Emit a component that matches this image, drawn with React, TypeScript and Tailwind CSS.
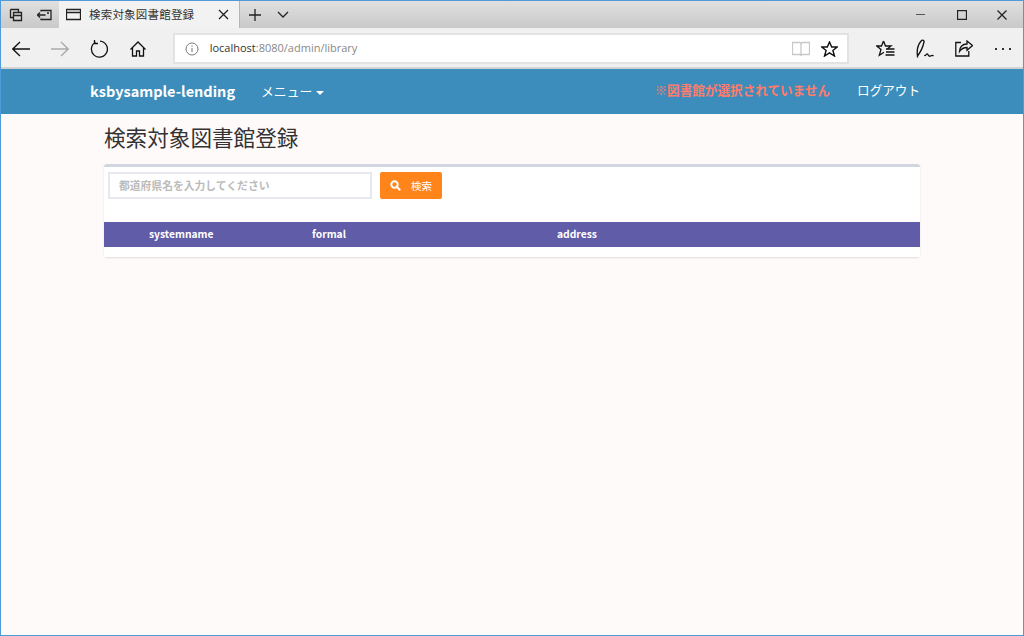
import React from "react";

const ic = { fill: "none", stroke: "currentColor", strokeWidth: 1.3 } as const;
const jp = "font-['Noto_Sans_CJK_JP','Noto_Sans',sans-serif]";
const latin = "font-['Open_Sans','Noto_Sans_CJK_JP',sans-serif]";

function Ico({ w = 20, h = 20, className = "", children }: { w?: number; h?: number; className?: string; children: React.ReactNode }) {
  return (
    <svg width={w} height={h} viewBox={`0 0 ${w} ${h}`} className={`shrink-0 ${className}`} {...ic}>
      {children}
    </svg>
  );
}

export default function App() {
  return (
    <div className={`w-[1024px] h-[636px] flex flex-col overflow-hidden border border-b-0 border-[#4f9bd9] bg-[#fffafa] ${jp}`}>
      {/* tab strip */}
      <div className="h-[27px] shrink-0 flex items-stretch bg-gradient-to-b from-[#e0e0e0] to-[#c9c9c9] text-[#222]">
        <div className="w-[29px] flex items-center justify-center">
          <Ico w={14} h={14}>
            <path d="M1.500 1.500h8v3M1.500 1.500v8h3" />
            <path d="M4.500 4.500h8v8h-8zM4.500 7.500h8" />
          </Ico>
        </div>
        <div className="w-[29px] flex items-center justify-center">
          <Ico w={15} h={12}>
            <path d="M4 2.500V1.500h10v9H4V9.500M0.500 6h8M3 3.500L0.500 6L3 8.500M10 4h2" />
          </Ico>
        </div>
        <div className="w-[181px] bg-[#f2f2f2] flex items-center border-r border-[#b5b5b5]">
          <Ico w={15} h={13} className="ml-[7px]">
            <path d="M0.500 1.500h14v10h-14zM0.500 4.500h14" />
          </Ico>
          <span className="ml-[8px] text-[11.500px] tracking-[0.2px] text-[#333] whitespace-nowrap">検索対象図書館登録</span>
          <Ico w={11} h={11} className="ml-[24px]">
            <path d="M1 1l9 9M10 1l-9 9" />
          </Ico>
        </div>
        <div className="w-[29px] flex items-center justify-center">
          <Ico w={12} h={12}>
            <path d="M6 0v12M0 6h12" />
          </Ico>
        </div>
        <div className="w-[27px] flex items-center justify-center">
          <Ico w={12} h={7}>
            <path d="M1 1l5 5l5-5" />
          </Ico>
        </div>
        <div className="flex-1" />
        <div className="w-[41px] flex items-center justify-center">
          <div className="w-[9px] h-[1.500px] bg-[#555]" />
        </div>
        <div className="w-[41px] flex items-center justify-center">
          <Ico w={10} h={10}>
            <path d="M0.500 0.500h9v9h-9z" />
          </Ico>
        </div>
        <div className="w-[41px] pr-[1px] flex items-center justify-center">
          <Ico w={10} h={10}>
            <path d="M0.500 0.500l9 9M9.500 0.500l-9 9" />
          </Ico>
        </div>
      </div>

      {/* toolbar */}
      <div className="h-[41px] shrink-0 flex items-center pt-[2px] bg-[#f0f0f0] border-b-2 border-[#d2d2d2] text-[#111]">
        <div className="w-[40px] flex justify-center">
          <Ico w={18} h={16}>
            <path d="M0.500 8H18M8 1L0.800 8L8 15" />
          </Ico>
        </div>
        <div className="w-[39px] flex justify-center text-[#aaa]">
          <Ico w={18} h={16}>
            <path d="M0 8H17.500M10 1l7.200 7l-7.200 7" />
          </Ico>
        </div>
        <div className="w-[39px] flex justify-center">
          <Ico w={18} h={18}>
            <path d="M5.500 2.200A8 8 0 1 0 10 1.200M4.500 0v3.500H8" />
          </Ico>
        </div>
        <div className="w-[39px] flex justify-center">
          <Ico w={16} h={16}>
            <path d="M0.500 8.500L8 1l7.500 7.500M2.500 7v8h4v-5h3v5h4V7" />
          </Ico>
        </div>
        <div className="ml-[15px] w-[678px] h-[31px] bg-white border-2 border-[#e3e3e3] flex items-center">
          <Ico w={14} h={14} className="ml-[10px] text-[#777]">
            <circle cx="7" cy="7" r="6" strokeWidth="1" />
            <path d="M7 6v4.200M7 3.500v1.300" strokeWidth="1" />
          </Ico>
          <span className={`ml-[11px] text-[11px] ${latin} text-[#888] whitespace-nowrap`}>
            <span className="text-[#333]">localhost</span>:8080/admin/library
          </span>
          <div className="flex-1" />
          <Ico w={18} h={15} className="text-[#c8c8c8] mr-[11px]">
            <path d="M0.500 1.500h7.500l1 1l1-1h7.500v12H10l-1 1l-1-1H0.500zM9 2.500v11" />
          </Ico>
          <Ico w={17} h={16} className="mr-[9px]">
            <path d="M8.500 1l2.200 5h5.500l-4.300 3.500l1.600 5.500l-5-3.200l-5 3.200l1.600-5.500L0.800 6h5.500z" strokeWidth="1.400" />
          </Ico>
        </div>
        <div className="ml-[16px] w-[40px] flex justify-center">
          <Ico w={19} h={17}>
            <path d="M7.500 1l2 5H15L10.500 9.500M7.500 1l-2 5H0.800l4.200 3.500l-1.700 5.800l4.700-3M10 9h8.500M10 12h8.500M9.500 15h9" />
          </Ico>
        </div>
        <div className="w-[39px] flex justify-center">
          <Ico w={18} h={19}>
            <path d="M1.500 17C0.500 11 2.500 5 5.500 1.500c1-1 3 0 2.500 1.500C7 8 4.500 13 1.500 17zM1.500 17v1.500M8.500 16c1 2 2-2 3-1s1 3 3 2s2-1 3 0" />
          </Ico>
        </div>
        <div className="w-[39px] flex justify-center">
          <Ico w={18} h={17}>
            <path d="M6 2.500H0.800V16h13v-5M17.500 5.500L12 1V4C7 4 4.500 7.500 4.500 11.500C6.500 8.500 9 7.500 12 7.500v2.800z" />
          </Ico>
        </div>
        <div className="w-[40px] flex justify-center gap-[5px]">
          <div className="w-[2px] h-[2px] bg-[#333]" />
          <div className="w-[2px] h-[2px] bg-[#333]" />
          <div className="w-[2px] h-[2px] bg-[#333]" />
        </div>
      </div>

      {/* navbar */}
      <div className="h-[45px] shrink-0 bg-[#3c8dbc] flex items-center pl-[89px] pr-[103px] text-white">
        <span className="mt-[-2px] text-[14.500px] font-bold whitespace-nowrap">ksbysample-lending</span>
        <span className="ml-[26px] mt-[-2px] text-[12.800px] whitespace-nowrap">メニュー</span>
        <span className="ml-[4px] mt-[2px] border-x-[4px] border-x-transparent border-t-[4px] border-t-white" />
        <div className="flex-1" />
        <span className="mt-[-2px] text-[12.600px] font-bold text-[#ff7b6b] whitespace-nowrap">※図書館が選択されていません</span>
        <span className="ml-[27px] mt-[-2px] text-[12.600px] whitespace-nowrap">ログアウト</span>
      </div>

      {/* content */}
      <main className="flex-1 min-h-0 pl-[103px] pr-[103px] border-b border-[#4f9bd9]">
        <h1 className="mt-[9px] h-[28px] text-[21.600px] leading-[28px] text-[#333]">検索対象図書館登録</h1>
        <div className="mt-[13px] bg-white rounded-[3px] border-t-[3px] border-[#d2d6de] shadow-[0_1px_2px_rgba(0,0,0,0.12)]">
          <div className="flex items-start pt-[5px] pl-[4px] h-[55px]">
            <div className="w-[264px] h-[27px] border-2 border-[#e6e8ee] flex items-center pl-[9px] text-[10.800px] font-bold text-[#bbb]">
              都道府県名を入力してください
            </div>
            <button className="ml-[8px] w-[62px] h-[27px] bg-[#ff851b] rounded-[2px] flex items-center text-white text-[10.500px]">
              <svg width="11" height="11" viewBox="0 0 11 11" className="ml-[10px]" fill="none" stroke="white" strokeWidth="2">
                <circle cx="4.500" cy="4.500" r="3.200" />
                <path d="M7 7l3.200 3.200" />
              </svg>
              <span className="ml-[10px]">検索</span>
            </button>
          </div>
          <div className="h-[25px] pb-[1px] bg-[#605ca8] text-white text-[10.300px] font-bold grid grid-cols-[208px_245px_1fr] items-center">
            <span className="pl-[45px]">systemname</span>
            <span>formal</span>
            <span>address</span>
          </div>
          <div className="h-[10px] bg-white" />
        </div>
      </main>
    </div>
  );
}
